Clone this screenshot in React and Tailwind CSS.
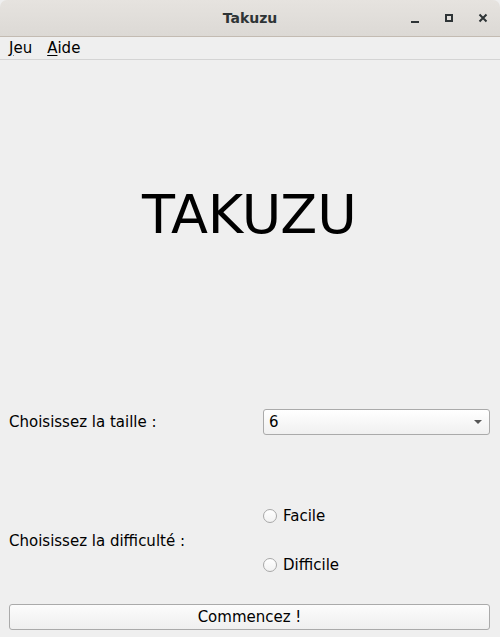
export default function App() {
  const font = { fontFamily: '"DejaVu Sans", sans-serif' };
  return (
    <div className="w-[500px] h-[637px] bg-[#efefef] flex flex-col overflow-hidden" style={font}>
      {/* title bar */}
      <div className="h-[37px] shrink-0 bg-gradient-to-b from-[#e6e3df] to-[#dcd9d5] border-b border-[#c3bbb2] rounded-t-[7px] relative flex items-center justify-center">
        <span className="text-[14px] font-bold text-[#2e3436]">Takuzu</span>
        <div className="absolute right-0 top-0 h-[36px] flex items-center">
          <div className="w-[34px] flex justify-center">
            <div className="w-[8px] h-[2px] bg-[#2e3436] mt-[7px]" />
          </div>
          <div className="w-[34px] flex justify-center">
            <div className="w-[8px] h-[8px] border-2 border-[#2e3436]" />
          </div>
          <div className="w-[34px] flex justify-center">
            <svg width="10" height="10" viewBox="0 0 10 10">
              <path d="M1.5 1.5 L8.5 8.5 M8.5 1.5 L1.5 8.5" stroke="#2e3436" strokeWidth="2" />
            </svg>
          </div>
        </div>
      </div>
      {/* menu bar */}
      <div className="h-[23px] shrink-0 border-b border-[#d4d4d4] flex items-center text-[15px] text-black">
        <span className="ml-[9px]"><span className="underline underline-offset-2">J</span>eu</span>
        <span className="ml-[15px]"><span className="underline underline-offset-2">A</span>ide</span>
      </div>
      {/* content */}
      <div className="flex flex-col pl-[9px] pr-[10px] text-[15px] text-black">
        <div className="h-[310px] flex items-center justify-center">
          <span className="text-[54px] leading-none">TAKUZU</span>
        </div>
        <div className="mt-[39px] flex items-center">
          <div className="w-[254px]">Choisissez la taille :</div>
          <div className="flex-1 h-[26px] border border-[#aaa] rounded-[3px] bg-gradient-to-b from-[#ffffff] to-[#f0f0f0] flex items-center px-[5px]">
            <span className="flex-1">6</span>
            <svg width="10" height="6" viewBox="0 0 10 6" className="mr-[1px]">
              <path d="M1 1 L9 1 L5 5 Z" fill="#555" />
            </svg>
          </div>
        </div>
        <div className="mt-[68px] flex items-center">
          <div className="w-[254px] pt-[2px]">Choisissez la difficulté :</div>
          <div className="flex flex-col gap-[23px]">
            <div className="h-[26px] flex items-center">
              <div className="w-[14px] h-[14px] rounded-full border border-[#a8a8a8] bg-gradient-to-b from-white to-[#f2f2f2]" />
              <span className="ml-[6px]">Facile</span>
            </div>
            <div className="h-[26px] flex items-center">
              <div className="w-[14px] h-[14px] rounded-full border border-[#a8a8a8] bg-gradient-to-b from-white to-[#f2f2f2]" />
              <span className="ml-[6px]">Difficile</span>
            </div>
          </div>
        </div>
        <div className="mt-[26px] h-[26px] border border-[#aaa] rounded-[3px] bg-gradient-to-b from-[#fcfcfc] to-[#efefef] flex items-center justify-center">
          Commencez !
        </div>
      </div>
    </div>
  );
}
